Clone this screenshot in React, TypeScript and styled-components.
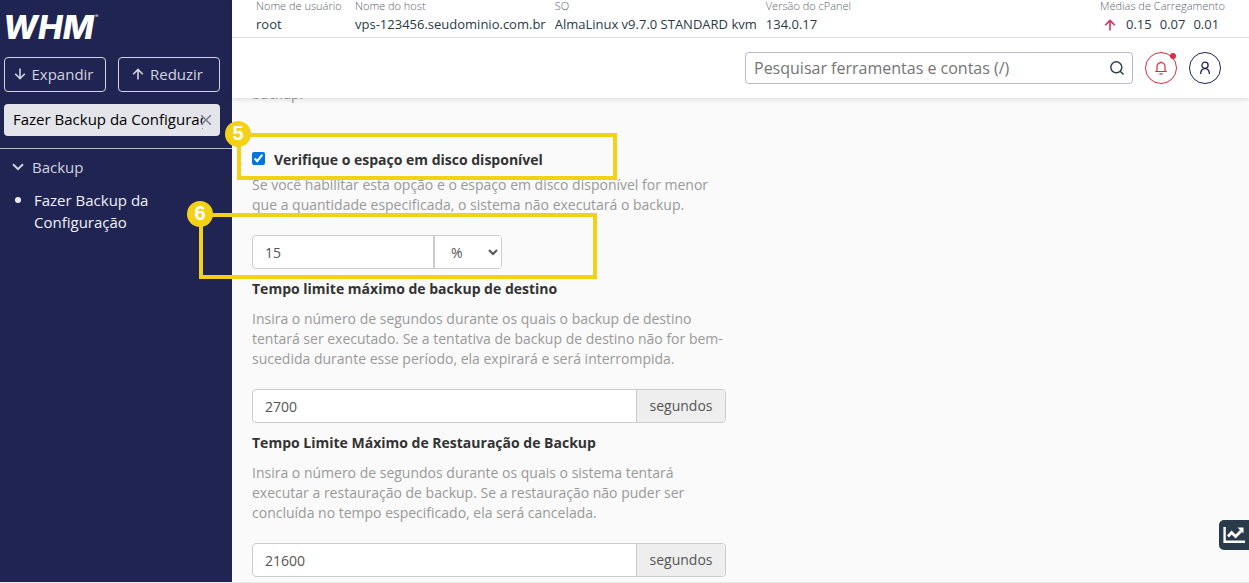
import React from "react";
import styled, { createGlobalStyle } from "styled-components";

const GlobalStyle = createGlobalStyle`
  *, *::before, *::after { box-sizing: border-box; }
  body {
    margin: 0;
    background: #fafafa;
    color: #333;
    font-family: "Open Sans", sans-serif;
    font-size: 14px;
    line-height: 20px;
  }
  button, input, select { font: inherit; }
  p, h1, ul { margin: 0; padding: 0; }
`;

const Page = styled.div`
  position: relative;
  display: flex;
  min-height: 100vh;
  border-bottom: 1px solid #eaeaea;
`;

const Sidebar = styled.aside`
  flex: 0 0 232px;
  min-width: 0;
  background: #1f2453;
  color: #d2d3dd;
`;

const SidebarTop = styled.div`
  display: flex;
  flex-direction: column;
  gap: 12px;
  padding: 8px 12px 12px 4px;
  border-bottom: 1px solid #b4b6c6;
`;

const Logo = styled.svg`
  display: block;
  width: 100px;
  height: 37px;
  overflow: visible;
`;

const ButtonPair = styled.div`
  display: grid;
  grid-template-columns: 1fr 1fr;
  gap: 12px;
`;

const OutlineButton = styled.button`
  display: flex;
  align-items: center;
  justify-content: center;
  gap: 6px;
  min-width: 0;
  height: 35px;
  padding: 0 3px 1px 0;
  border: 1px solid #d2d3dd;
  border-radius: 4px;
  background: transparent;
  color: #d2d3dd;
  font-size: 15px;
`;

const FilterBox = styled.div`
  display: flex;
  align-items: center;
  height: 32px;
  padding: 0 8px 0 9px;
  border-radius: 4px;
  background: #e4e5ea;
`;

const FilterInput = styled.input`
  flex: 1;
  min-width: 0;
  height: 32px;
  padding: 0 0 2px;
  border: 0;
  background: transparent;
  color: #000;
  font-size: 15px;
`;

const ClearButton = styled.button`
  display: flex;
  margin-left: -3px;
  padding: 0;
  border: 0;
  background: transparent;
  color: #7b7f8c;
`;

const NavGroup = styled.button`
  display: flex;
  align-items: center;
  gap: 8px;
  padding: 7px 12px;
  border: 0;
  background: transparent;
  color: #d2d3dd;
  font-size: 15px;
  line-height: 22px;
`;

const NavList = styled.ul`
  list-style: none;
  padding: 4px 60px 0 15px;
`;

const NavItem = styled.li`
  display: flex;
  gap: 13px;
  font-size: 15px;
  line-height: 22px;

  &::before {
    content: "";
    flex: 0 0 6px;
    height: 6px;
    margin-top: 8px;
    border-radius: 50%;
    background: #f0f0f4;
  }
`;

const NavLink = styled.a`
  color: #f0f0f4;
  text-decoration: none;
`;

const Main = styled.main`
  flex: 1;
  min-width: 0;
  background: #fafafa;
`;

const Header = styled.header`
  position: relative;
  z-index: 1;
  background: #fff;
  box-shadow: 0 1px 5px rgba(0, 0, 0, 0.14);
`;

const InfoBar = styled.div`
  display: flex;
  gap: 9px;
  padding: 0 24px;
  border-bottom: 1px solid #dfe0e3;
`;

const Info = styled.div<{ $end?: boolean }>`
  min-width: 90px;
  margin-left: ${(p) => (p.$end ? "auto" : "0")};
`;

const InfoLabel = styled.div`
  color: #5c6470;
  font-size: 11px;
  font-weight: 300;
  line-height: 12px;
  white-space: nowrap;
`;

const InfoValue = styled.div`
  color: #293a4a;
  font-size: 13px;
  line-height: 25px;
  white-space: nowrap;
`;

const Loads = styled(InfoValue)`
  display: flex;
  align-items: center;
  gap: 8px;
  padding-left: 4px;

  svg { margin-right: 2px; }
`;

const Toolbar = styled.div`
  display: flex;
  align-items: center;
  justify-content: flex-end;
  gap: 12px;
  height: 60px;
  padding: 0 28px;
`;

const SearchBox = styled.div`
  display: flex;
  align-items: center;
  flex: 0 1 388px;
  height: 32px;
  padding: 0 8px;
  border: 1px solid #b9b9cc;
  border-radius: 4px;
  background: #fff;
  color: #293a4a;
`;

const SearchInput = styled.input`
  flex: 1;
  min-width: 0;
  height: 30px;
  padding: 0;
  border: 0;
  background: transparent;
  font-size: 16px;

  &::placeholder { color: #757575; opacity: 1; }
`;

const RoundButton = styled.button<{ $color: string }>`
  position: relative;
  display: flex;
  align-items: center;
  justify-content: center;
  width: 32px;
  height: 32px;
  padding: 0;
  border: 1px solid ${(p) => p.$color};
  border-radius: 50%;
  background: #fff;
  color: ${(p) => p.$color};
`;

const AlertDot = styled.span`
  position: absolute;
  top: 0;
  right: 0;
  width: 6px;
  height: 6px;
  border-radius: 50%;
  background: #dd2c44;
`;

const Form = styled.form`
  max-width: 514px;
  margin-top: -14px;
  padding: 0 20px 5px;
`;

const Help = styled.p`
  color: #999;
`;

const CheckRow = styled.label`
  display: flex;
  gap: 9px;
  margin-top: 46px;
  margin-bottom: 5px;
  font-weight: 700;
`;

const Checkbox = styled.input`
  width: 13px;
  height: 13px;
  margin: 2px 0 0;
  accent-color: #0075db;
`;

const FieldTitle = styled.label`
  display: block;
  margin: 10px 0;
  font-weight: 700;
`;

const InputGroup = styled.div<{ $short?: boolean }>`
  display: flex;
  width: ${(p) => (p.$short ? "250px" : "100%")};
  height: 34px;
  margin-top: 20px;
  border: 1px solid #ccc;
  border-radius: 4px;
  background: #fff;
  overflow: hidden;
`;

const TextInput = styled.input`
  flex: 1;
  min-width: 0;
  padding: 2px 12px 0;
  border: 0;
  background: transparent;
  color: #555;
`;

const UnitSelect = styled.select`
  flex: 0 0 68px;
  padding: 0 0 0 12px;
  border: 0;
  border-left: 2px solid #ccc;
  background: #fff;
  color: #555;
`;

const Addon = styled.span`
  flex: 0 0 89px;
  border-left: 1px solid #ccc;
  background: #eee;
  color: #555;
  line-height: 32px;
  text-align: center;
`;

const Callout = styled.div<{ $x: number; $y: number; $w: number; $h: number }>`
  position: absolute;
  z-index: 2;
  left: ${(p) => p.$x}px;
  top: ${(p) => p.$y}px;
  width: ${(p) => p.$w}px;
  height: ${(p) => p.$h}px;
  border: 4px solid #f3d117;
  pointer-events: none;
`;

const CalloutBadge = styled.span`
  position: absolute;
  top: -16px;
  left: -16px;
  width: 26px;
  height: 26px;
  border-radius: 50%;
  background: #f3d117;
  color: #fff;
  font-family: "Liberation Sans", sans-serif;
  font-size: 20px;
  font-weight: 700;
  line-height: 24px;
  text-align: center;
`;

const StatsTab = styled.button`
  position: absolute;
  right: 0;
  bottom: 32px;
  display: flex;
  align-items: center;
  width: 30px;
  height: 30px;
  padding: 0 0 0 4px;
  border: 0;
  border-radius: 5px 0 0 5px;
  background: #293a4a;
  color: #fff;
`;

const Arrow = ({ up, color = "currentColor" }: { up?: boolean; color?: string }) => (
  <svg width="12" height="12" viewBox="0 0 12 12" fill="none" stroke={color} strokeWidth="1.6" aria-hidden="true">
    {up ? <path d="M6 11.5V1.5M1.2 6.2 6 1.4l4.8 4.8" /> : <path d="M6 .5v10M1.2 5.8 6 10.6l4.8-4.8" />}
  </svg>
);

const infos = [
  ["Nome de usuário", "root"],
  ["Nome do host", "vps-123456.seudominio.com.br"],
  ["SO", "AlmaLinux v9.7.0 STANDARD kvm"],
  ["Versão do cPanel", "134.0.17"],
];

export default function App() {
  return (
    <>
      <GlobalStyle />
      <Page>
        <Sidebar>
          <SidebarTop>
            <Logo viewBox="0 0 100 37" role="img" aria-label="WHM">
              <text x="-1" y="31" fill="#fff" fontFamily="Inter, sans-serif" fontSize="33" fontWeight="800" fontStyle="italic">WHM</text>
              <text x="91" y="10" fill="#fff" fontFamily="Inter, sans-serif" fontSize="5">®</text>
            </Logo>
            <ButtonPair>
              <OutlineButton type="button"><Arrow />Expandir</OutlineButton>
              <OutlineButton type="button"><Arrow up />Reduzir</OutlineButton>
            </ButtonPair>
            <FilterBox>
              <FilterInput aria-label="Filtrar menu" defaultValue="Fazer Backup da Configuração" />
              <ClearButton type="button" aria-label="Limpar">
                <svg width="12" height="12" viewBox="0 0 12 12" fill="none" stroke="currentColor" strokeWidth="1.6">
                  <path d="m1.2 1.2 9.6 9.6M10.8 1.2l-9.6 9.6" />
                </svg>
              </ClearButton>
            </FilterBox>
          </SidebarTop>
          <nav>
            <NavGroup type="button">
              <svg width="12" height="8" viewBox="0 0 12 8" fill="none" stroke="currentColor" strokeWidth="2" aria-hidden="true">
                <path d="m1 1.2 5 5 5-5" />
              </svg>
              Backup
            </NavGroup>
            <NavList>
              <NavItem><NavLink href="#backup">Fazer Backup da Configuração</NavLink></NavItem>
            </NavList>
          </nav>
        </Sidebar>

        <Main>
          <Header>
            <InfoBar>
              {infos.map(([label, value]) => (
                <Info key={label}>
                  <InfoLabel>{label}</InfoLabel>
                  <InfoValue>{value}</InfoValue>
                </Info>
              ))}
              <Info $end>
                <InfoLabel>Médias de Carregamento</InfoLabel>
                <Loads>
                  <Arrow up color="#dd2c5a" />
                  <span>0.15</span>
                  <span>0.07</span>
                  <span>0.01</span>
                </Loads>
              </Info>
            </InfoBar>
            <Toolbar>
              <SearchBox>
                <SearchInput type="text" aria-label="Pesquisar" placeholder="Pesquisar ferramentas e contas (/)" />
                <svg width="14" height="14" viewBox="0 0 14 14" fill="none" stroke="currentColor" strokeWidth="1.4" aria-hidden="true">
                  <circle cx="6.3" cy="6.3" r="5.5" />
                  <path d="m10.2 10.2 3.3 3.3" />
                </svg>
              </SearchBox>
              <RoundButton type="button" $color="#dd2c44" aria-label="Notificações">
                <svg width="12" height="14" viewBox="0 0 12 14" fill="none" stroke="currentColor" strokeWidth="1.2">
                  <path d="M.2 10.5h11.6M2 10.5V5.6a4 4 0 0 1 8 0v4.9M6 .5v1.1M4.4 12.9h3.2" />
                </svg>
                <AlertDot />
              </RoundButton>
              <RoundButton type="button" $color="#1f2453" aria-label="Usuário">
                <svg width="12" height="14" viewBox="0 0 12 14" fill="none" stroke="currentColor" strokeWidth="1.3">
                  <circle cx="6" cy="4.3" r="3.1" />
                  <path d="M1.6 13c0-3.4 1.7-5.4 4.4-5.4s4.4 2 4.4 5.4" />
                </svg>
              </RoundButton>
            </Toolbar>
          </Header>

          <Form>
            <Help>backup.</Help>
            <CheckRow>
              <Checkbox type="checkbox" defaultChecked />
              Verifique o espaço em disco disponível
            </CheckRow>
            <Help>
              Se você habilitar esta opção e o espaço em disco disponível for menor que a quantidade especificada, o
              sistema não executará o backup.
            </Help>
            <InputGroup $short>
              <TextInput type="text" aria-label="Espaço mínimo" defaultValue="15" />
              <UnitSelect aria-label="Unidade" defaultValue="%">
                <option>%</option>
                <option>MB</option>
              </UnitSelect>
            </InputGroup>

            <FieldTitle htmlFor="backup-timeout">Tempo limite máximo de backup de destino</FieldTitle>
            <Help>
              Insira o número de segundos durante os quais o backup de destino tentará ser executado. Se a tentativa
              de backup de destino não for bem-sucedida durante esse período, ela expirará e será interrompida.
            </Help>
            <InputGroup>
              <TextInput id="backup-timeout" type="text" defaultValue="2700" />
              <Addon>segundos</Addon>
            </InputGroup>

            <FieldTitle htmlFor="restore-timeout">Tempo Limite Máximo de Restauração de Backup</FieldTitle>
            <Help>
              Insira o número de segundos durante os quais o sistema tentará executar a restauração de backup. Se a
              restauração não puder ser concluída no tempo especificado, ela será cancelada.
            </Help>
            <InputGroup>
              <TextInput id="restore-timeout" type="text" defaultValue="21600" />
              <Addon>segundos</Addon>
            </InputGroup>
          </Form>
        </Main>

        <Callout $x={237} $y={133} $w={380} $h={47}><CalloutBadge>5</CalloutBadge></Callout>
        <Callout $x={199} $y={213} $w={398} $h={66}><CalloutBadge>6</CalloutBadge></Callout>

        <StatsTab type="button" aria-label="Estatísticas">
          <svg width="22" height="18" viewBox="0 0 22 18" fill="none" stroke="currentColor" strokeWidth="2.4">
            <path d="M1.6 1v14.8H22" />
            <path d="m5 10.5 3.6-4 4 4L18 5" strokeWidth="2.8" />
            <path d="M14.5 1.5h6v6z" fill="currentColor" stroke="none" />
          </svg>
        </StatsTab>
      </Page>
    </>
  );
}
